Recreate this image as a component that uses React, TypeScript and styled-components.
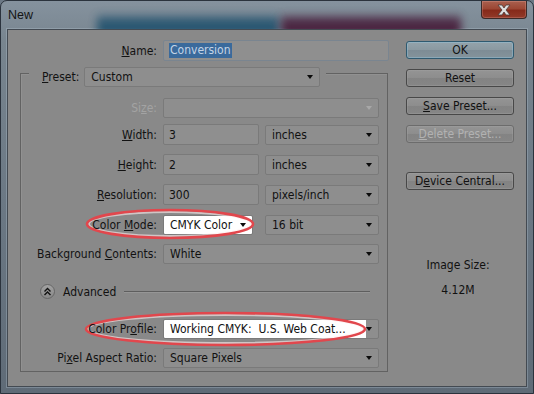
import React from 'react';
import styled, { createGlobalStyle } from 'styled-components';

const FONT = `"DejaVu Sans Condensed", "Liberation Sans", sans-serif`;

const Global = createGlobalStyle`
  html, body { margin: 0; padding: 0; width: 534px; height: 394px; overflow: hidden; background: #6b7885; }
  #root { width: 534px; height: 394px; }
  * { box-sizing: border-box; }
`;

const Window = styled.div`
  width: 534px;
  height: 394px;
  display: flex;
  flex-direction: column;
  background: linear-gradient(to bottom, #85929e 0, #78858f 40px, #6b7884 200px, #5f6b77 100%);
  border: 1px solid #2b333d;
  border-radius: 7px 7px 0 0;
  overflow: hidden;
  font-family: ${FONT};
  font-size: 12px;
  color: #111;
`;

const TitleBar = styled.div`
  position: relative;
  height: 28px;
  flex: none;
  display: flex;
  align-items: flex-start;
  padding-left: 7px;
  overflow: hidden;
`;

const Blob = styled.div<{ $left: number; $width: number; $color: string }>`
  position: absolute;
  left: ${p => p.$left}px;
  width: ${p => p.$width}px;
  top: 12px;
  height: 26px;
  background: linear-gradient(to bottom, transparent 0, ${p => p.$color} 8px);
  filter: blur(4px);
  opacity: 0.85;
`;

const Title = styled.span`
  position: relative;
  font-family: "Liberation Sans", sans-serif;
  font-size: 12.5px;
  line-height: 16px;
  padding-top: 6px;
  color: #141414;
`;

const CloseButton = styled.div`
  position: relative;
  margin-left: auto;
  margin-right: 6px;
  width: 46px;
  height: 18px;
  border: 1px solid #3b2a28;
  border-top: none;
  border-radius: 0 0 4px 4px;
  background: linear-gradient(to bottom, #a9604f 0, #9c4734 45%, #862a1a 55%, #923a29 100%);
  box-shadow: inset 0 0 0 1px rgba(255, 200, 190, 0.22);
  display: flex;
  align-items: center;
  justify-content: center;
`;

const Body = styled.div`
  flex: 1;
  display: flex;
  padding: 0 6px 6px 6px;
`;

const Content = styled.div`
  flex: 1;
  display: flex;
  background: #898989;
  border: 1px solid #434a52;
  box-shadow: 0 0 0 1px rgba(190, 205, 220, 0.3);
`;

const FormCol = styled.div`
  width: 382px;
  flex: none;
  display: flex;
  flex-direction: column;
  padding-top: 10px;
`;

const NameRow = styled.div`
  display: grid;
  grid-template-columns: 149px 226px;
  column-gap: 6px;
  align-items: center;
`;

const Label = styled.span<{ $disabled?: boolean }>`
  position: relative;
  z-index: 1;
  text-align: right;
  white-space: nowrap;
  color: ${p => (p.$disabled ? '#a3a3a3' : '#121212')};
  line-height: 14px;
`;

const TextBox = styled.div<{ $w: number; $tint?: boolean }>`
  width: ${p => p.$w}px;
  height: 21px;
  display: flex;
  align-items: center;
  padding-left: 5px;
  background: #8f8f8f;
  border: 1px solid ${p => (p.$tint ? '#7a8590' : '#7a7a7a')};
  border-radius: 2px;
  white-space: nowrap;
`;

const Selected = styled.span`
  background: #3a6a9c;
  color: #c4d4e6;
  padding: 0 1px;
  line-height: 15px;
`;

const SelectBox = styled.div<{ $w: number; $whiteTo?: number; $disabled?: boolean }>`
  width: ${p => p.$w}px;
  height: 20px;
  flex: none;
  display: flex;
  align-items: center;
  padding: 0 6px 0 6px;
  border: 1px solid #7a7a7a;
  border-radius: 2px;
  white-space: nowrap;
  background: ${p =>
    p.$whiteTo ? `linear-gradient(to right, #ffffff 0, #ffffff ${p.$whiteTo}px, #8e8e8e ${p.$whiteTo}px)` : '#8e8e8e'};
  &::after {
    content: '';
    flex: none;
    margin-left: auto;
    border-left: 3.5px solid transparent;
    border-right: 3.5px solid transparent;
    border-top: 4px solid ${p => (p.$disabled ? '#a8a8a8' : '#0b0b0b')};
  }
`;

const GroupBox = styled.div`
  margin-left: 12px;
  margin-top: 12px;
  width: 368px;
  border: 1px solid #626262;
  box-shadow: inset 1px 1px 0 rgba(160, 160, 160, 0.35);
  display: flex;
  flex-direction: column;
  padding: 0 7px 3px 0;
`;

const GroupHeader = styled.div`
  align-self: flex-start;
  margin: -7px 0 0 8px;
  padding: 0 6px 0 13px;
  background: #898989;
  display: flex;
  align-items: center;
  gap: 5px;
`;

const FieldRow = styled.div<{ $mt: number }>`
  position: relative;
  margin-top: ${p => p.$mt}px;
  display: grid;
  grid-template-columns: 136px 216px;
  column-gap: 6px;
  align-items: center;
  height: 21px;
`;

const Fields = styled.div`
  display: flex;
  align-items: center;
  justify-content: space-between;
`;

const AdvancedRow = styled.div`
  margin-top: 20px;
  height: 15px;
  display: flex;
  align-items: center;
  padding-left: 19px;
  gap: 8px;
`;

const RoundButton = styled.div`
  width: 15px;
  height: 15px;
  border-radius: 50%;
  border: 1px solid #666;
  background: linear-gradient(to bottom, #a2a2a2, #888888);
  display: flex;
  align-items: center;
  justify-content: center;
`;

const Rule = styled.div`
  flex: 1;
  height: 1px;
  background: #5e5e5e;
  margin-right: 10px;
  box-shadow: 0 1px 0 rgba(170, 170, 170, 0.4);
`;

const HighlightSvg = styled.svg<{ $left: number; $top: number }>`
  position: absolute;
  left: ${p => p.$left}px;
  top: ${p => p.$top}px;
  pointer-events: none;
  overflow: visible;
`;

const ButtonCol = styled.div`
  margin-left: 16px;
  width: 108px;
  flex: none;
  display: flex;
  flex-direction: column;
  padding-top: 11px;
  gap: 10px;
`;

const Button = styled.div<{ $mt?: number; $default?: boolean; $disabled?: boolean }>`
  margin-top: ${p => p.$mt || 0}px;
  height: 18px;
  display: flex;
  align-items: center;
  justify-content: center;
  border-radius: 3px;
  border: 1px solid ${p => (p.$default ? '#2f5a70' : p.$disabled ? '#6c6c6c' : '#484848')};
  background: ${p =>
    p.$default
      ? 'linear-gradient(to bottom, #94a3ab 0, #8a99a1 50%, #7d8c95 50%, #84939b 100%)'
      : 'linear-gradient(to bottom, #949494 0, #8d8d8d 50%, #838383 50%, #868686 100%)'};
  box-shadow: inset 0 0 0 1px ${p => (p.$default ? 'rgba(150,200,225,0.4)' : 'rgba(170,170,170,0.3)')};
  color: ${p => (p.$disabled ? '#b2b2b2' : '#111')};
  white-space: nowrap;
  line-height: 14px;
`;

const ImageInfo = styled.div`
  margin-top: 58px;
  display: flex;
  flex-direction: column;
  align-items: center;
  gap: 11px;
  line-height: 14px;
  margin-left: -4px;
`;

type HL = { w: number; h: number; left: number; top: number };
const Highlight = ({ w, h, left, top }: HL) => (
  <HighlightSvg $left={left} $top={top} width={w} height={h} viewBox={`0 0 ${w} ${h}`}>
    <ellipse cx={w / 2} cy={h / 2} rx={w / 2 - 4} ry={h / 2 - 4} fill="none" stroke="rgba(255,236,236,0.6)" strokeWidth={2} />
    <ellipse cx={w / 2} cy={h / 2} rx={w / 2 - 2} ry={h / 2 - 2} fill="none" stroke="#e1474d" strokeWidth={2.6} />
  </HighlightSvg>
);

const CloseX = () => (
  <svg width="16" height="12" viewBox="0 0 16 12">
    <path d="M2 1 L6 1 L8 4 L10 1 L14 1 L10 6 L14 11 L10 11 L8 8 L6 11 L2 11 L6 6 Z" fill="#e0e0e0" stroke="#4a3a38" strokeWidth="0.8" />
  </svg>
);

const Chevrons = () => (
  <svg width="9" height="9" viewBox="0 0 9 9">
    <polyline points="1.5,4.5 4.5,1.5 7.5,4.5" fill="none" stroke="#111" strokeWidth="1.4" />
    <polyline points="1.5,8 4.5,5 7.5,8" fill="none" stroke="#111" strokeWidth="1.4" />
  </svg>
);

export default function App() {
  return (
    <>
      <Global />
      <Window>
        <TitleBar>
          <Blob $left={96} $width={182} $color="#1d4f6c" />
          <Blob $left={280} $width={180} $color="#431534" />
          <Title>New</Title>
          <CloseButton>
            <CloseX />
          </CloseButton>
        </TitleBar>
        <Body>
          <Content>
            <FormCol>
              <NameRow>
                <Label><u>N</u>ame:</Label>
                <TextBox $w={226} $tint>
                  <Selected>Conversion</Selected>
                </TextBox>
              </NameRow>
              <GroupBox>
                <GroupHeader>
                  <Label><u>P</u>reset:</Label>
                  <SelectBox $w={236}>Custom</SelectBox>
                </GroupHeader>
                <FieldRow $mt={10}>
                  <Label $disabled>Si<u>z</u>e:</Label>
                  <SelectBox $w={216} $disabled />
                </FieldRow>
                <FieldRow $mt={6}>
                  <Label><u>W</u>idth:</Label>
                  <Fields>
                    <TextBox $w={96}>3</TextBox>
                    <SelectBox $w={114}>inches</SelectBox>
                  </Fields>
                </FieldRow>
                <FieldRow $mt={9}>
                  <Label><u>H</u>eight:</Label>
                  <Fields>
                    <TextBox $w={96}>2</TextBox>
                    <SelectBox $w={114}>inches</SelectBox>
                  </Fields>
                </FieldRow>
                <FieldRow $mt={9}>
                  <Label><u>R</u>esolution:</Label>
                  <Fields>
                    <TextBox $w={96}>300</TextBox>
                    <SelectBox $w={114}>pixels/inch</SelectBox>
                  </Fields>
                </FieldRow>
                <FieldRow $mt={9}>
                  <Label>Color <u>M</u>ode:</Label>
                  <Fields>
                    <SelectBox $w={90} $whiteTo={90}>CMYK Color</SelectBox>
                    <SelectBox $w={114}>16 bit</SelectBox>
                  </Fields>
                  <Highlight w={170} h={32} left={64} top={-6} />
                </FieldRow>
                <FieldRow $mt={8}>
                  <Label>Background <u>C</u>ontents:</Label>
                  <SelectBox $w={216}>White</SelectBox>
                </FieldRow>
                <AdvancedRow>
                  <RoundButton>
                    <Chevrons />
                  </RoundButton>
                  <span>Advanced</span>
                  <Rule />
                </AdvancedRow>
                <FieldRow $mt={19}>
                  <Label>Color Pr<u>o</u>file:</Label>
                  <SelectBox $w={216} $whiteTo={202}>Working CMYK:&nbsp; U.S. Web Coat...</SelectBox>
                  <Highlight w={283} h={36} left={63} top={-7} />
                </FieldRow>
                <FieldRow $mt={8}>
                  <Label>Pi<u>x</u>el Aspect Ratio:</Label>
                  <SelectBox $w={216}>Square Pixels</SelectBox>
                </FieldRow>
              </GroupBox>
            </FormCol>
            <ButtonCol>
              <Button $default>OK</Button>
              <Button>Reset</Button>
              <Button><u>S</u>ave Preset...</Button>
              <Button $disabled><u>D</u>elete Preset...</Button>
              <Button $mt={19}>D<u>e</u>vice Central...</Button>
              <ImageInfo>
                <span>Image Size:</span>
                <span>4.12M</span>
              </ImageInfo>
            </ButtonCol>
          </Content>
        </Body>
      </Window>
    </>
  );
}
